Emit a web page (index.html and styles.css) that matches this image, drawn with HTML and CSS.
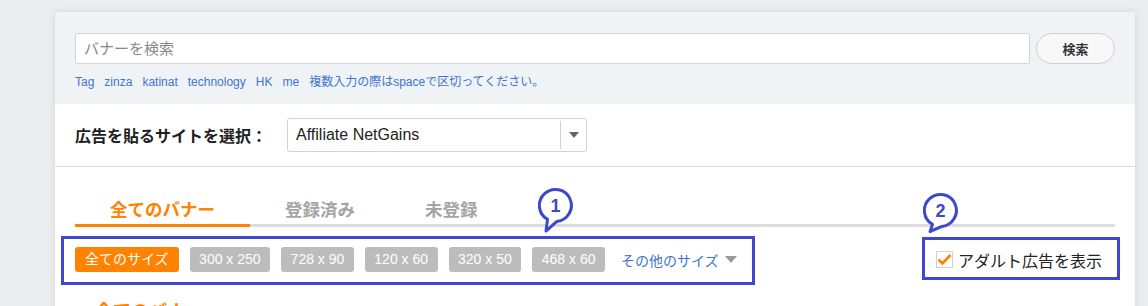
FILE: index.html
```html
<!DOCTYPE html>
<html lang="ja">
<head>
<meta charset="utf-8">
<title>バナー</title>
<link rel="stylesheet" href="styles.css">
</head>
<body>
<div class="panel">
  <section class="search">
    <div class="search-row">
      <div class="search-input">バナーを検索</div>
      <button class="search-btn">検索</button>
    </div>
    <div class="tags">
      <a>Tag</a><a>zinza</a><a>katinat</a><a>technology</a><a>HK</a><a>me</a><span class="hint">複数入力の際はspaceで区切ってください。</span>
    </div>
  </section>
  <section class="site">
    <span class="site-label">広告を貼るサイトを選択：</span>
    <div class="select">
      <span class="select-value">Affiliate NetGains</span>
      <span class="select-arrow"><i class="tri"></i></span>
    </div>
  </section>
  <section class="content">
    <div class="tabs">
      <div class="tab active">全てのバナー</div>
      <div class="tab">登録済み</div>
      <div class="tab">未登録</div>
    </div>
    <div class="filters">
      <div class="sizes">
        <span class="chip on">全てのサイズ</span>
        <span class="chip">300 x 250</span>
        <span class="chip">728 x 90</span>
        <span class="chip">120 x 60</span>
        <span class="chip">320 x 50</span>
        <span class="chip">468 x 60</span>
        <a class="more">その他のサイズ<i class="tri"></i></a>
      </div>
      <label class="adult">
        <span class="check"><svg width="15" height="13" viewBox="0 0 15 13"><path d="M1.5 6.5 L5.5 10.5 L13.5 2" fill="none" stroke="#ff7f00" stroke-width="2.6"/></svg></span>
        <span>アダルト広告を表示</span>
      </label>
    </div>
    <h2 class="list-title">全てのバナー</h2>
  </section>

  <div class="note-box box1"></div>
  <div class="note-box box2"></div>
  <svg class="bubble b1" width="42" height="48" viewBox="0 0 42 48">
    <path d="M21.9 34.4 A16 16 0 1 0 12.5 32.4 L11 44 Z" fill="#fff" stroke="#3f48cc" stroke-width="3" stroke-linejoin="round"/>
    <text x="20.5" y="25" text-anchor="middle" class="bubble-num">1</text>
  </svg>
  <svg class="bubble b2" width="42" height="48" viewBox="0 0 42 48">
    <path d="M21.9 34.4 A16 16 0 1 0 12.5 32.4 L10 39.5 Z" fill="#fff" stroke="#3f48cc" stroke-width="3" stroke-linejoin="round"/>
    <text x="20.5" y="25" text-anchor="middle" class="bubble-num">2</text>
  </svg>
</div>
</body>
</html>
```
FILE: styles.css
```css
* { box-sizing: border-box; }
html, body { margin: 0; padding: 0; }
body {
  background: #ebecee;
  font-family: "Liberation Sans", "Noto Sans CJK JP", sans-serif;
  color: #222;
  height: 306px;
  overflow: hidden;
}
.panel {
  position: relative;
  margin: 12px 0 0 55px;
  width: 1080px;
  background: #fff;
  box-shadow: 0 0 6px rgba(0,0,0,0.10);
  min-height: 400px;
}
.search {
  background: #eff3f6;
  height: 92px;
  padding: 21px 20px 0;
}
.search-row { display: flex; gap: 6px; }
.search-input {
  flex: 1;
  height: 31px;
  background: #fff;
  border: 1px solid #d4d4d4;
  border-radius: 2px;
  padding-left: 8px;
  font-size: 15px;
  line-height: 29px;
  color: #888;
}
.search-btn {
  width: 79px;
  height: 31px;
  border: 1px solid #cfcfcf;
  border-radius: 16px;
  background: #f8f8f8;
  font-family: inherit;
  font-size: 13px;
  font-weight: bold;
  color: #333;
  padding: 0;
}
.tags {
  margin-top: 9px;
  font-size: 12px;
  line-height: 18px;
  color: #3f74d2;
}
.tags a { margin-right: 10px; }
.site {
  height: 63px;
  border-bottom: 1px solid #dcdcdc;
  display: flex;
  align-items: center;
  padding: 0 20px;
}
.site-label {
  font-size: 16px;
  font-weight: bold;
  width: 212px;
  color: #1e1e1e;
}
.select {
  width: 300px;
  height: 34px;
  border: 1px solid #d2d2d2;
  border-radius: 3px;
  display: flex;
  align-items: center;
}
.select-value {
  flex: 1;
  padding-left: 8px;
  font-size: 16px;
  color: #222;
}
.select-arrow {
  width: 26px;
  height: 28px;
  border-left: 1px solid #d2d2d2;
  display: flex;
  align-items: center;
  justify-content: center;
}
.tri {
  display: inline-block;
  width: 0; height: 0;
  border-left: 5.5px solid transparent;
  border-right: 5.5px solid transparent;
  border-top: 6px solid #666;
}
.content { padding: 0 20px; }
.tabs {
  display: flex;
  margin-top: 31px;
  border-bottom: 3px solid #dcdcdc;
}
.tab {
  padding: 0 35px 2px;
  line-height: 24px;
  font-size: 17.5px;
  font-weight: bold;
  color: #a5a5a5;
  border-bottom: 3px solid transparent;
  margin-bottom: -3px;
}
.tab.active { color: #ff8200; border-bottom-color: #ff8200; }
.filters {
  margin-top: 20px;
  display: flex;
  justify-content: space-between;
  align-items: center;
  height: 25px;
}
.sizes { display: flex; align-items: center; gap: 11px; }
.chip {
  height: 25px;
  line-height: 25px;
  padding: 0 9.5px;
  border-radius: 3px;
  background: #bcbcbc;
  color: #fff;
  font-size: 14px;
}
.chip.on { background: #ff8200; padding: 0 10px; }
.more {
  margin-left: 5px;
  font-size: 14px;
  color: #3f74d2;
  display: flex;
  align-items: center;
  gap: 6px;
}
.more .tri { border-top-color: #9a9a9a; border-left-width: 6.5px; border-right-width: 6.5px; border-top-width: 7px; }
.adult {
  display: flex;
  align-items: center;
  gap: 5px;
  margin-right: 13px;
  font-size: 16px;
  color: #222;
}
.check {
  width: 17px; height: 17px;
  border: 1px solid #d0d0d0;
  background: #fff;
  display: flex;
  align-items: center;
  justify-content: center;
}
.list-title {
  margin: 28px 0 0 20px;
  font-size: 18px;
  line-height: 24px;
  color: #ff8200;
}
.note-box {
  position: absolute;
  border: 3px solid #3f48cc;
}
.box1 { left: 6px; top: 224px; width: 694px; height: 49px; }
.box2 { left: 867px; top: 225px; width: 198px; height: 43px; }
.bubble { position: absolute; overflow: visible; }
.b1 { left: 480px; top: 175px; }
.b2 { left: 865px; top: 180px; }
.bubble-num {
  font-family: "Liberation Sans", sans-serif;
  font-weight: bold;
  font-size: 18px;
  fill: #3f48cc;
}
```
